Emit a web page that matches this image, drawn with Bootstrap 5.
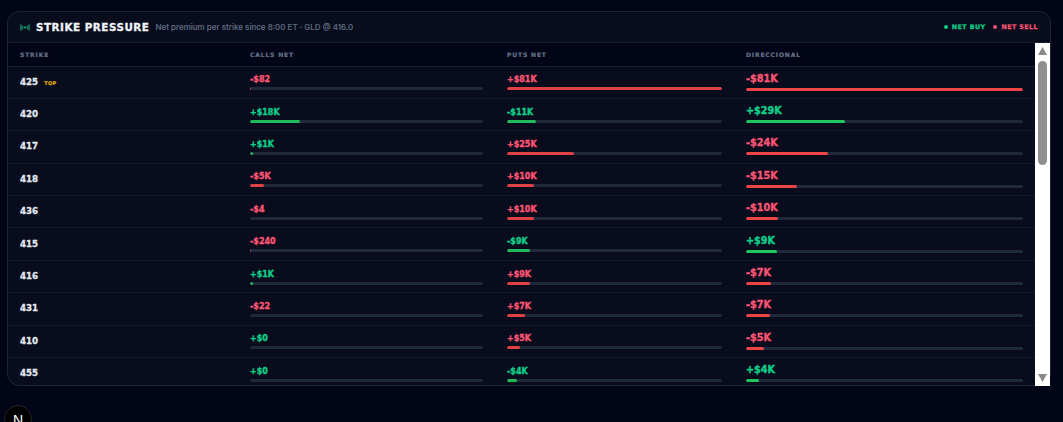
<!DOCTYPE html>
<html lang="en"><head><meta charset="utf-8"><title>Strike Pressure</title>
<link href="https://cdn.jsdelivr.net/npm/bootstrap@5.3.0/dist/css/bootstrap.min.css" rel="stylesheet">
<style>
html,body{height:100%;overflow:hidden}
body{background:#020417;font-family:"DejaVu Sans",sans-serif;color:#e2e8f0}
.sp-wrap{padding:11px 12px 0 7px}
.sp-panel{height:375px;border:1px solid #1e2335;border-radius:12px;background:#080c1c;display:flex;flex-direction:column}
.sp-head{height:31px;flex:none;padding:0 12px;border-bottom:1px solid #1a1f30}
.sp-title{font:700 10.4px "DejaVu Sans",sans-serif;letter-spacing:.5px;color:#f1f5f9;-webkit-text-stroke:.3px #f1f5f9}
.sp-sub{font:500 8px Inter,sans-serif;color:#5f6e84;margin-left:6px;-webkit-text-stroke:.1px}
.sp-legend{font-weight:700;font-size:6.3px;letter-spacing:.45px;-webkit-text-stroke:.25px}
.sp-dot{width:4px;height:4px;border-radius:50%;display:inline-block}
.sp-body{flex:1;min-height:0;display:flex}
.sp-scroll{flex:1;min-width:0;overflow:hidden;border-bottom-left-radius:11px}
.sp-bar{flex:none;width:15px;margin-bottom:-1px;background:#fff;display:flex;flex-direction:column;align-items:center;padding:4px 0}
.sp-thumb{width:9px;height:104px;margin-top:6px;border-radius:5px;background:#8f8f8f}
.sp-table{--bs-table-bg:transparent;--bs-table-color:inherit;table-layout:fixed;width:100%;margin:0;border-color:#171c2d}
.sp-table th{background:#020417;height:23px;padding:0 12px;vertical-align:middle;font-weight:700;font-size:6px;letter-spacing:.85px;color:#64728a;-webkit-text-stroke:.2px;border-bottom:1px solid #1a1f30}
.sp-table td{height:32.4px;padding:0 12px;vertical-align:middle;border-bottom:1px solid #141929}
.sp-strike{font-weight:700;font-size:8.7px;color:#e2e8f0;-webkit-text-stroke:.3px}
.sp-top{font-weight:700;font-size:5px;letter-spacing:.4px;color:#e0aa08;margin-left:6px;-webkit-text-stroke:.2px}
.sp-val{font-weight:700;font-size:8px;line-height:12px;margin-bottom:1px;-webkit-text-stroke:.35px}
.sp-val-lg{font-size:9.7px;margin-top:-1px;margin-bottom:3px;-webkit-text-stroke:.35px}
.sp-track{height:3px;border-radius:2px;background:#1e293b;overflow:hidden}
.sp-fill{height:100%;border-radius:2px}
.sp-soft{opacity:.92}
.up{color:#10cf8a}.dn{color:#fb5574}
.f-up{background:#22c55e}.f-dn{background:#ef4444}
.b-up{background:#10cf8a}.b-dn{background:#fb5574}
.sp-next{position:fixed;left:4px;top:405px;width:28px;height:28px;border-radius:50%;background:#000;border:1px solid #262626;color:#fff;font:400 14px "Liberation Sans",sans-serif;display:flex;justify-content:center;padding-top:6px}
</style></head><body>
<div class="sp-wrap"><div class="sp-panel">
<div class="sp-head d-flex align-items-center">
<svg width="10" height="7" viewBox="0 0 10 7" class="flex-none" style="margin-right:6px"><g fill="none" stroke="#0ea371" stroke-width="1.2"><path d="M1 .5v6M9 .5v6"/><path d="M2.6 1.6v3.8M7.4 1.6v3.8" stroke="#0b7f5a"/></g><circle cx="5" cy="3.5" r="1.1" fill="#10b981"/></svg>
<span class="sp-title">STRIKE PRESSURE</span>
<span class="sp-sub">Net premium per strike since 8:00 ET · GLD @ 416.0</span>
<div class="sp-legend ms-auto d-flex gap-2">
<span class="up d-flex align-items-center gap-1"><i class="sp-dot b-up"></i>NET BUY</span>
<span class="dn d-flex align-items-center gap-1"><i class="sp-dot b-dn"></i>NET SELL</span>
</div></div>
<div class="sp-body">
<div class="sp-scroll">
<table class="table sp-table">
<colgroup><col style="width:230px"><col style="width:257px"><col style="width:239px"><col style="width:301px"></colgroup>
<thead><tr><th>STRIKE</th><th>CALLS NET</th><th>PUTS NET</th><th>DIRECCIONAL</th></tr></thead>
<tbody id="rows"></tbody></table>
</div>
<div class="sp-bar" aria-hidden="true">
<svg width="9" height="8" viewBox="0 0 9 8"><path d="M4.5 0L9 8H0z" fill="#8a8a8a"/></svg>
<div class="sp-thumb"></div>
<svg class="mt-auto mb-0" width="9" height="8" viewBox="0 0 9 8"><path d="M4.5 8L9 0H0z" fill="#8a8a8a"/></svg>
</div>
</div></div></div>
<div class="sp-next">N</div>
<script>
const d=[["425","-$82",.4,"d","+$81K",100,"d","-$81K",100,"d"],["420","+$18K",21.6,"u","-$11K",13.5,"u","+$29K",35.7,"u"],["417","+$1K",1.2,"u","+$25K",31,"d","-$24K",29.5,"d"],["418","-$5K",6,"d","+$10K",12.4,"d","-$15K",18.5,"d"],["436","-$4",0,"d","+$10K",12.4,"d","-$10K",11.6,"d"],["415","-$240",.4,"d","-$9K",10.5,"u","+$9K",11.2,"u"],["416","+$1K",1.2,"u","+$9K",10.5,"d","-$7K",9.2,"d"],["431","-$22",0,"d","+$7K",8.4,"d","-$7K",8.8,"d"],["410","+$0",0,"u","+$5K",6.2,"d","-$5K",6.4,"d"],["455","+$0",0,"u","-$4K",4.6,"u","+$4K",4.8,"u"]];
const cell=(v,w,k,lg)=>`<td><div class="sp-val ${lg?'sp-val-lg':''} ${k=='u'?'up':'dn'}">${v}</div><div class="sp-track"><div class="sp-fill ${lg?'':'sp-soft'} ${k=='u'?'f-up':'f-dn'}" style="width:${w}%"></div></div></td>`;
document.getElementById('rows').innerHTML=d.map((r,i)=>`<tr><td class="sp-strike">${r[0]}${i==0?'<span class="sp-top">TOP</span>':''}</td>${cell(r[1],r[2],r[3])}${cell(r[4],r[5],r[6])}${cell(r[7],r[8],r[9],1)}</tr>`).join('');
</script>
<script src="https://cdn.jsdelivr.net/npm/bootstrap@5.3.0/dist/js/bootstrap.bundle.min.js"></script>
</body></html>
